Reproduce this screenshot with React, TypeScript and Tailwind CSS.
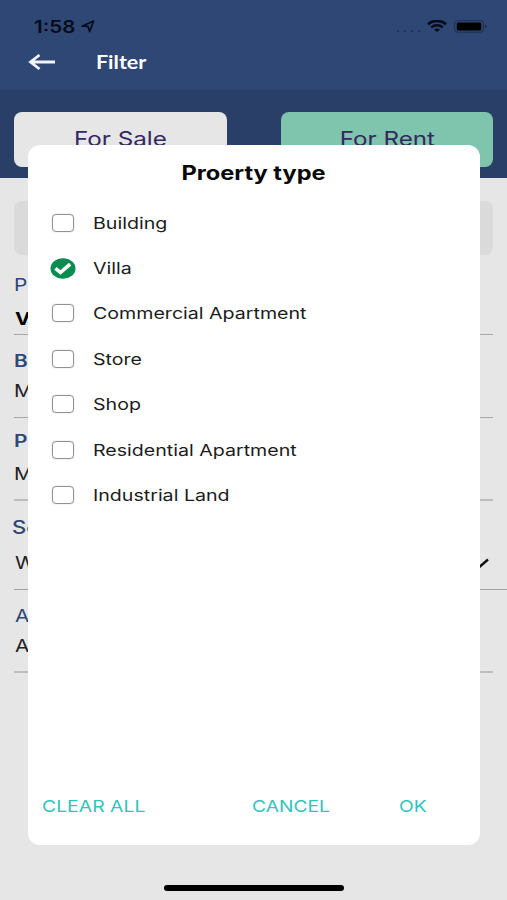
import { type ReactNode } from "react";

const OPTIONS = [
  { label: "Building", checked: false },
  { label: "Villa", checked: true },
  { label: "Commercial Apartment", checked: false },
  { label: "Store", checked: false },
  { label: "Shop", checked: false },
  { label: "Residential Apartment", checked: false },
  { label: "Industrial Land", checked: false },
];

function Wide({ children, className = "" }: { children: ReactNode; className?: string }) {
  return (
    <span className={`inline-block origin-left scale-x-[1.225] whitespace-nowrap ${className}`}>
      {children}
    </span>
  );
}

function StatusBar() {
  return (
    <div className="flex h-[42px] items-start pt-[15px] pr-[19px] pl-[34px] text-[#050b17]">
      <span className="inline-block w-[47px]">
        <Wide className="text-[16.8px] leading-[22px] font-semibold">1:58</Wide>
      </span>
      <svg className="mt-[5px] h-[13px] w-[14px]" viewBox="0 0 14 13" fill="none">
        <path d="M1 6.2 12.6 1 8.6 11.6 7 6.4Z" stroke="currentColor" strokeWidth="1.6" strokeLinejoin="round" />
      </svg>
      <div className="mt-[15px] ml-auto flex gap-[5px] opacity-30">
        <i className="h-[2px] w-[2px] bg-current" />
        <i className="h-[2px] w-[2px] bg-current" />
        <i className="h-[2px] w-[2px] bg-current" />
        <i className="h-[2px] w-[2px] bg-current" />
      </div>
      <svg className="mt-[5px] ml-[7px] h-[12px] w-[20px]" viewBox="0 0 20 12" fill="none">
        <path d="M1 4.2C6-.3 14-.3 19 4.2" stroke="currentColor" strokeWidth="2.6" />
        <path d="M4.2 7.4c3.4-2.9 8.2-2.9 11.6 0" stroke="currentColor" strokeWidth="2.3" />
        <path d="M7.2 9.7c1.7-1.5 3.9-1.5 5.600 0L10 12Z" fill="currentColor" />
      </svg>
      <svg className="mt-[5px] ml-[7px] h-[13px] w-[34px]" viewBox="0 0 34 13">
        <rect x=".6" y=".6" width="28.8" height="11.6" rx="3" fill="none" stroke="currentColor" strokeOpacity=".4" />
        <rect x="2.8" y="2.4" width="24.4" height="8" rx="1.5" fill="#000" />
        <path d="M31 4.5c2 .5 2 3.3 0 3.8Z" fill="currentColor" opacity=".45" />
      </svg>
    </div>
  );
}

function Header() {
  return (
    <header className="h-[90px] bg-[#2e4775]">
      <StatusBar />
      <div className="flex h-[40px] items-center pl-[28px] text-white">
        <svg className="h-[18px] w-[28px]" viewBox="0 0 28 18" fill="none">
          <path d="M27 9H3M11.500 2 2.500 9l9 7" stroke="#f2f5ff" strokeWidth="2.8" />
        </svg>
        <span className="ml-[40px] inline-block origin-left scale-x-[1.1] font-[Lato,sans-serif] text-[19.5px] leading-[24px] font-bold">
          Filter
        </span>
      </div>
    </header>
  );
}

function Segment({ children, className }: { children: ReactNode; className: string }) {
  return (
    <div className={`flex h-[55px] justify-center rounded-[8px] pt-[13px] ${className}`}>
      <span className="inline-block scale-x-[1.21] text-[20px] leading-[28px] whitespace-nowrap text-[#33285f]">
        {children}
      </span>
    </div>
  );
}

function CheckMark() {
  return (
    <svg className="h-[21px] w-[26px]" viewBox="0 0 26 21">
      <ellipse cx="13" cy="10.5" rx="12.5" ry="10.2" fill="#078d50" />
      <path d="m5.4 10.3 5.1 4.2 9.6-8.4" fill="none" stroke="#fff" strokeWidth="3.6" />
    </svg>
  );
}

function Option({ label, checked }: { label: string; checked: boolean }) {
  return (
    <li className="flex h-[45.4px] items-center">
      <span className="flex w-[26px] justify-center">
        {checked ? (
          <CheckMark />
        ) : (
          <i className="block h-[18px] w-[22px] rounded-[4px] border-[1.5px] border-[#929292] shadow-[0_0_1px_#929292]" />
        )}
      </span>
      <Wide className="ml-[17.4px] text-[16px] leading-[22px] text-[#1c1c1c]">{label}</Wide>
    </li>
  );
}

function PropertyTypeDialog() {
  return (
    <section className="absolute top-[145px] left-[28px] flex h-[699.5px] w-[452px] flex-col rounded-[12px] bg-white">
      <h2 className="mt-[15px] text-center text-[19.5px] leading-[26px] font-bold text-[#080808]">
        <span className="inline-block scale-x-[1.21]">Proerty type</span>
      </h2>
      <ul className="mt-[14px] pl-[22px]">
        {OPTIONS.map((o) => (
          <Option key={o.label} label={o.label} checked={o.checked} />
        ))}
      </ul>
      <footer className="mt-auto mb-[26.5px] flex text-[16.5px] leading-[24px] text-[#30c4bc]">
        <span className="w-[210px] pl-[14px]">
          <span className="inline-block origin-left scale-x-[1.175] whitespace-nowrap">CLEAR ALL</span>
        </span>
        <span className="w-[147px] pl-[14px]">
          <span className="inline-block origin-left scale-x-[1.165]">CANCEL</span>
        </span>
        <span className="pl-[14px]">
          <span className="inline-block origin-left scale-x-[1.165]">OK</span>
        </span>
      </footer>
    </section>
  );
}

export default function App() {
  return (
    <div className="relative h-[900px] w-[507px] overflow-hidden bg-[#e6e6e6] font-[Inter,sans-serif] text-[#222]">
      <Header />
      <div className="flex h-[88px] justify-between bg-[#293f68] px-[14px] pt-[22px]">
        <Segment className="w-[213px] bg-[#e6e6e7]">For Sale</Segment>
        <Segment className="w-[212px] bg-[#7fc4ad]">For Rent</Segment>
      </div>
      <main className="pl-[14px] text-[17px] leading-[24px]">
        <div className="mt-[23px] mr-[14px] h-[54px] rounded-[8px] bg-[#dadada]" />
        <div className="mr-[14px] flex h-[80px] flex-col border-b border-[#a9a9a9] pt-[18px]">
          <Wide className="text-[#2e4775]">P</Wide>
          <Wide className="mt-[10px] ml-px font-bold text-black">Villa</Wide>
        </div>
        <div className="mr-[14px] flex h-[83px] flex-col border-b border-[#a9a9a9] pt-[14px]">
          <Wide className="font-semibold text-[#2e4775]">B</Wide>
          <Wide className="mt-[6px]">M</Wide>
        </div>
        <div className="mr-[14px] flex h-[83px] flex-col border-b-2 border-[#bdbdbd] pt-[11px]">
          <Wide className="font-semibold text-[#2e4775]">P</Wide>
          <Wide className="mt-[9px]">M</Wide>
        </div>
        <div className="flex h-[89px] flex-col border-b border-[#a0a0a0] pt-[15px]">
          <Wide className="-ml-[2px] text-[18px] font-medium text-[#2e4775]">So</Wide>
          <div className="mt-[11px] flex items-center justify-between pr-[18px]">
            <Wide className="ml-px">W</Wide>
            <svg className="h-[10px] w-[18px]" viewBox="0 0 18 10" fill="none">
              <path d="m1 1.5 8 7 8-7" stroke="#111" strokeWidth="2.4" />
            </svg>
          </div>
        </div>
        <div className="mr-[14px] flex h-[83px] flex-col border-b-2 border-[#bdbdbd] pt-[14px]">
          <Wide className="ml-px text-[#2e4775]">A</Wide>
          <Wide className="mt-[6px] ml-px">A</Wide>
        </div>
      </main>
      <PropertyTypeDialog />
      <div className="absolute bottom-[9px] left-[164px] h-[6px] w-[180px] rounded-full bg-black" />
    </div>
  );
}
